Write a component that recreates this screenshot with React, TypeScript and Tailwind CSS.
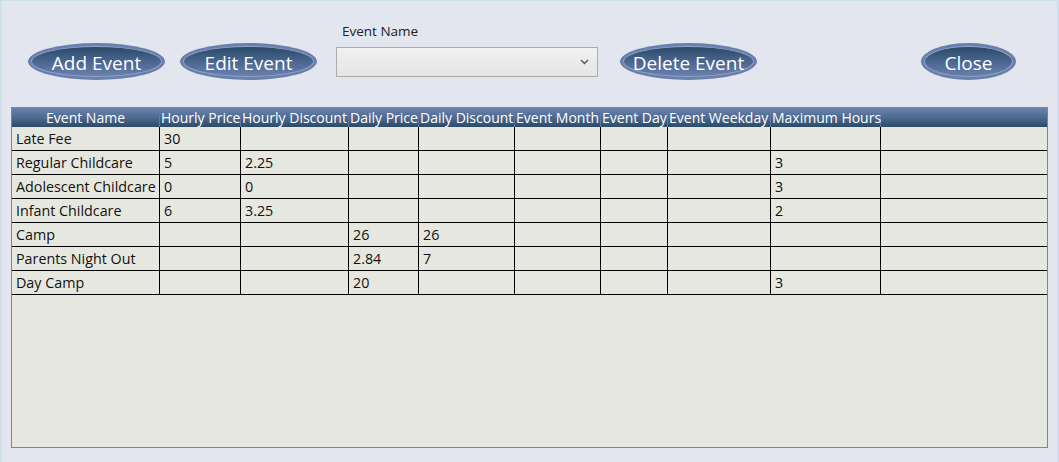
import React from "react";

const cols = [148, 81, 108, 70, 96, 86, 67, 103, 110];
const headers = [
  "Event Name",
  "Hourly Price",
  "Hourly Discount",
  "Daily Price",
  "Daily Discount",
  "Event Month",
  "Event Day",
  "Event Weekday",
  "Maximum Hours",
];
const rows: string[][] = [
  ["Late Fee", "30", "", "", "", "", "", "", ""],
  ["Regular Childcare", "5", "2.25", "", "", "", "", "", "3"],
  ["Adolescent Childcare", "0", "0", "", "", "", "", "", "3"],
  ["Infant Childcare", "6", "3.25", "", "", "", "", "", "2"],
  ["Camp", "", "", "26", "26", "", "", "", ""],
  ["Parents Night Out", "", "", "2.84", "7", "", "", "", ""],
  ["Day Camp", "", "", "20", "", "", "", "", "3"],
];

function Pill({ label, width }: { label: string; width: number }) {
  return (
    <div
      className="h-[37px] rounded-[50%] bg-[#6a80ac] p-[3px] shrink-0"
      style={{ width }}
    >
      <div className="w-full h-full rounded-[50%] bg-gradient-to-b from-[#2b4a69] via-[#4a6690] to-[#6a80ae] flex items-center justify-center border border-[#8fa2c6]">
        <span className="text-white text-[19px] leading-none pt-[3px]">{label}</span>
      </div>
    </div>
  );
}

export default function App() {
  return (
    <div
      className="w-[1059px] h-[462px] bg-[#e3e6ee] border-t border-l-2 border-r-2 border-[#cde0ec] flex flex-col overflow-hidden"
      style={{ fontFamily: '"Open Sans", "Noto Sans", sans-serif' }}
    >
      <div className="flex items-end h-[79px] pl-[26px]">
        <div>
          <Pill label="Add Event" width={137} />
        </div>
        <div className="ml-[15px]">
          <Pill label="Edit Event" width={137} />
        </div>
        <div className="ml-[19px] flex flex-col mb-[3px]">
          <span className="text-[13.5px] text-[#222] pl-[6px] leading-none mb-[9px]">Event Name</span>
          <div className="w-[262px] h-[30px] border border-[#acacac] bg-gradient-to-b from-[#f1f1f1] to-[#e5e5e5] flex items-center justify-end pr-[8px]">
            <svg width="9" height="6" viewBox="0 0 9 6">
              <path d="M1 1 L4.5 4.5 L8 1" stroke="#555" strokeWidth="1.4" fill="none" />
            </svg>
          </div>
        </div>
        <div className="ml-[22px]">
          <Pill label="Delete Event" width={137} />
        </div>
        <div className="ml-[164px]">
          <Pill label="Close" width={95} />
        </div>
      </div>

      <div className="ml-[9px] mt-[27px] w-[1037px] h-[341px] border border-[#6f88ae] bg-[#e6e8df] flex flex-col">
        <div className="flex h-[19px] bg-gradient-to-b from-[#6a83ae] via-[#4d6a92] to-[#2b4b68]">
          {headers.map((h, i) => (
            <div
              key={h}
              className={
                "h-full flex items-center text-white text-[14px] leading-none whitespace-nowrap overflow-visible border-r border-[#5f7aa2] " +
                (i === 0 ? "justify-center" : "pl-[1px]")
              }
              style={{ width: cols[i] }}
            >
              {h}
            </div>
          ))}
          <div className="flex-1" />
        </div>
        {rows.map((r, ri) => (
          <div key={ri} className="flex h-[24px] border-b border-black">
            {r.map((c, ci) => (
              <div
                key={ci}
                className="h-full border-r border-black flex items-center pl-[4px] pt-[1px] text-[14.3px] text-[#111] whitespace-nowrap"
                style={{ width: cols[ci] }}
              >
                {c}
              </div>
            ))}
            <div className="flex-1" />
          </div>
        ))}
      </div>
    </div>
  );
}
